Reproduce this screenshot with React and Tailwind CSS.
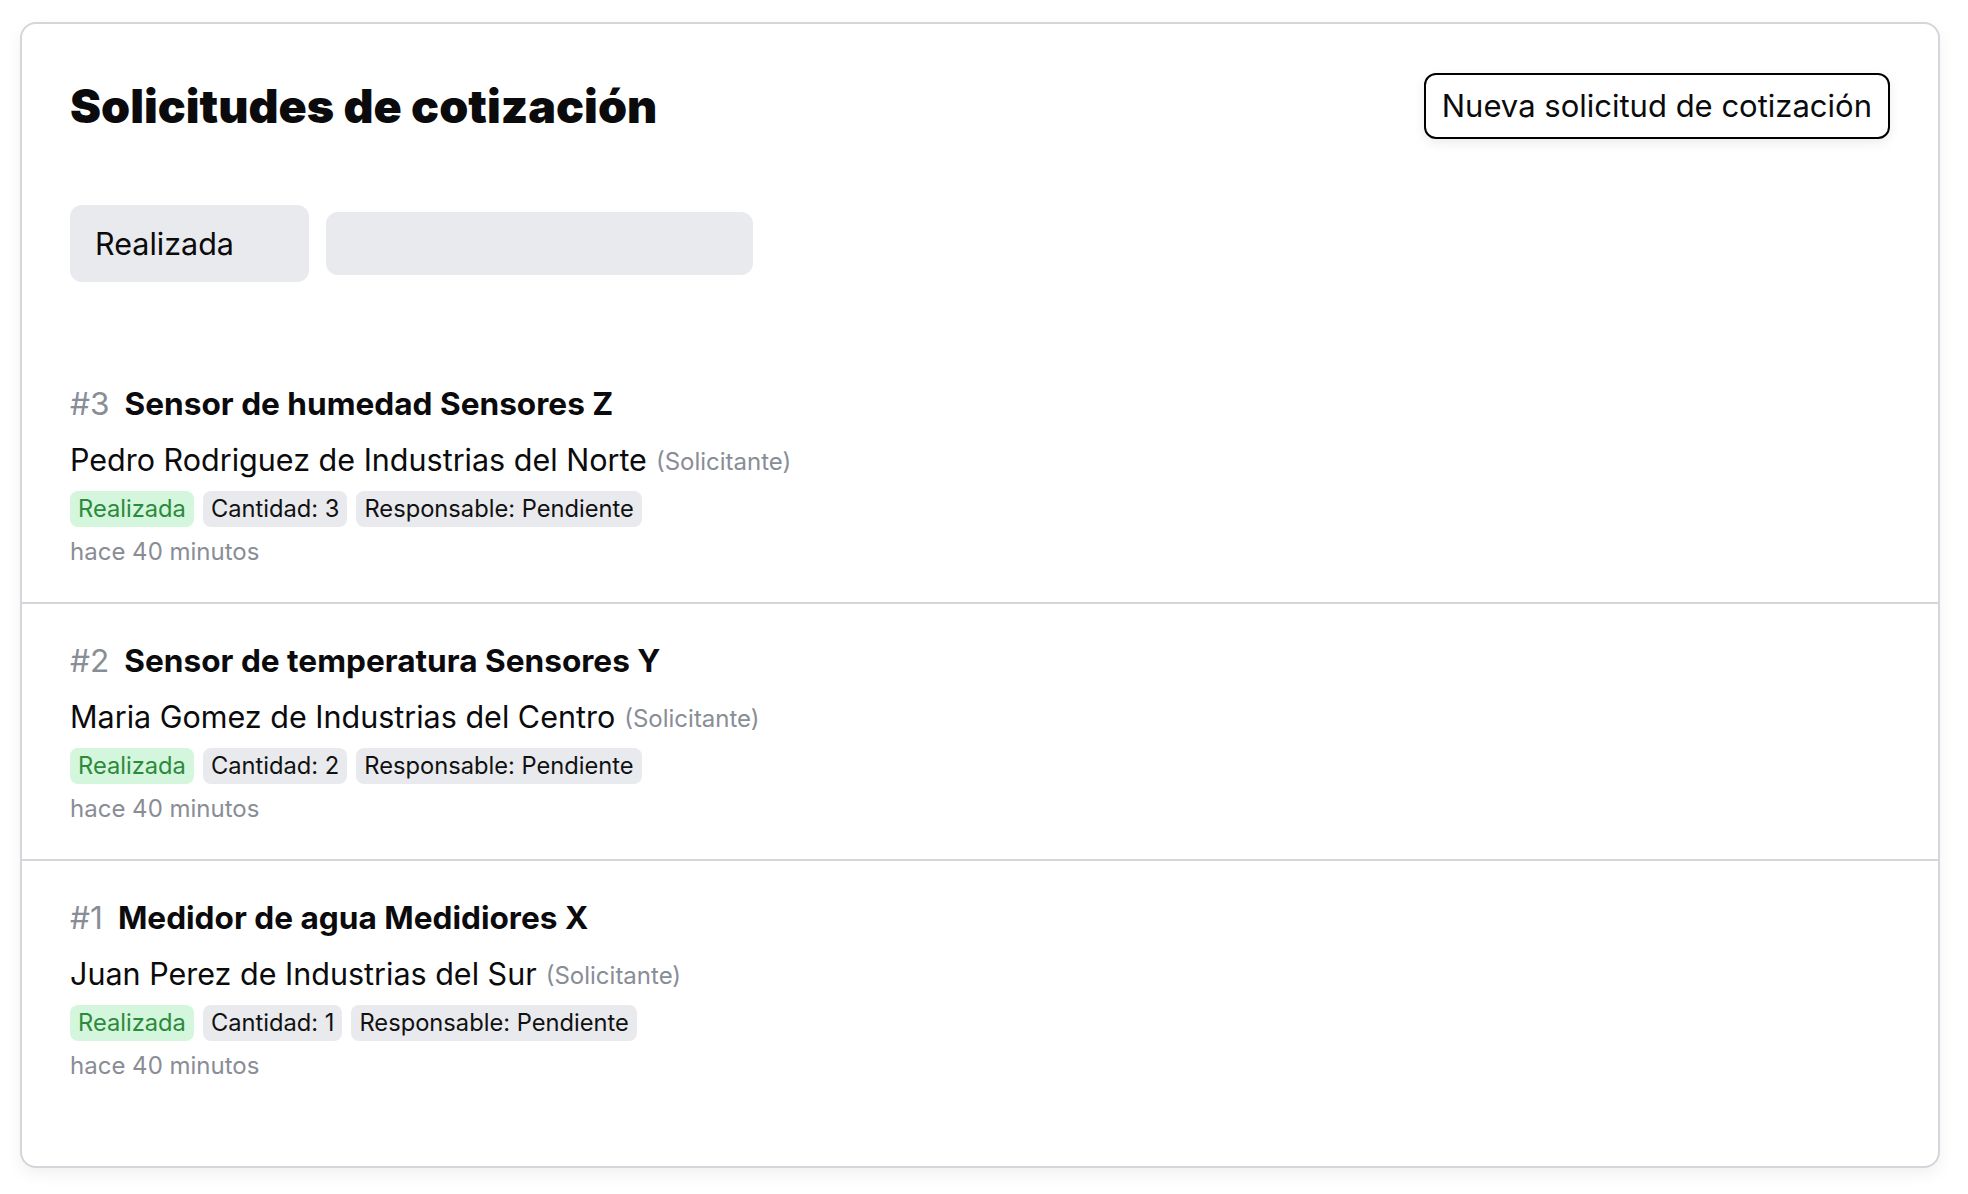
const solicitudes = [
    { id: 3, titulo: 'Sensor de humedad Sensores Z', solicitante: 'Pedro Rodriguez de Industrias del Norte', cantidad: 3 },
    { id: 2, titulo: 'Sensor de temperatura Sensores Y', solicitante: 'Maria Gomez de Industrias del Centro', cantidad: 2 },
    { id: 1, titulo: 'Medidor de agua Medidiores X', solicitante: 'Juan Perez de Industrias del Sur', cantidad: 1 },
]

const Badge = ({ children, green }) => (
    <span className={`h-[36px] px-[8px] rounded-[8px] flex items-center text-[23.7px] leading-none ${green ? 'bg-[#d4f6dc] text-[#2c8a3d]' : 'bg-[#e9eaee] text-[#111111]'}`}>
        {children}
    </span>
)

const SolicitudRow = ({ item, first }) => (
    <div className={`px-[48px] pt-[35px] pb-[35px] ${first ? '' : 'border-t-2 border-[#d4d6db]'}`}>
        <div className="h-[44px] flex items-center gap-[15px] text-[31.6px]">
            <span className="text-[#888d96]">#{item.id}</span>
            <span className="font-bold text-[#0b0b0d]">{item.titulo}</span>
        </div>

        <div className="mt-[14px] h-[40px] flex items-center text-[30.5px] text-[#0b0b0d]">
            <span>{item.solicitante}</span>
            <span className="ml-[9px] text-[24px] text-[#888d96] mt-[3px]">(Solicitante)</span>
        </div>

        <div className="mt-[11px] flex gap-[9px]">
            <Badge green>Realizada</Badge>
            <Badge>Cantidad: {item.cantidad}</Badge>
            <Badge>Responsable: Pendiente</Badge>
        </div>

        <p className="mt-[10px] h-[30px] flex items-center text-[24px] text-[#888d96]">hace 40 minutos</p>
    </div>
)

const App = () => {
    return (
        <div className="min-h-screen bg-white pt-[22px] pl-[20px] font-['Inter',sans-serif]">
            <div className="w-[1920px] border-2 border-[#d4d6db] rounded-[16px] bg-white shadow-[0_6px_16px_rgba(0,0,0,0.06)] pb-[50px]">
                <div className="px-[48px] pt-[49px]">
                    <div className="flex items-center justify-between">
                        <h1 className="text-[46.6px] leading-[56px] font-black text-[#0b0b0d]">
                            Solicitudes de cotización
                        </h1>
                        <button className="h-[66px] px-[16px] border-2 border-black rounded-[12px] bg-white text-[31px] text-[#0b0b0d] shadow-[0_4px_12px_rgba(0,0,0,0.08)]">
                            Nueva solicitud de cotización
                        </button>
                    </div>

                    <div className="mt-[66px] flex items-center gap-[17px]">
                        <div className="w-[239px] h-[77px] rounded-[12px] bg-[#e9eaee] pl-[25px] flex items-center text-[30.5px] text-[#0b0b0d]">
                            Realizada
                        </div>
                        <div className="w-[427px] h-[63px] rounded-[12px] bg-[#e9eaee]"></div>
                    </div>
                </div>

                <div className="mt-[65px]">
                    {solicitudes.map((item, i) => (
                        <SolicitudRow key={item.id} item={item} first={i === 0} />
                    ))}
                </div>
            </div>
        </div>
    )
}

export default App
